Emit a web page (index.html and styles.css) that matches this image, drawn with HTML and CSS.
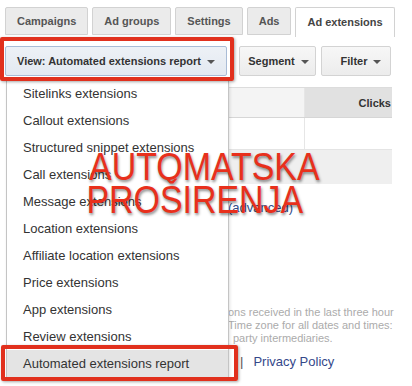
FILE: index.html
```html
<!DOCTYPE html>
<html lang="en">
<head>
<meta charset="utf-8">
<title>Ad extensions</title>
<link rel="stylesheet" href="styles.css">
</head>
<body>
<div class="page">
  <nav class="tabs">
    <div class="tab">Campaigns</div>
    <div class="tab">Ad groups</div>
    <div class="tab">Settings</div>
    <div class="tab">Ads</div>
    <div class="tab tab-active">Ad extensions</div>
  </nav>

  <div class="toolbar">
    <div class="btn btn-view">View: Automated extensions report <span class="caret"></span></div>
    <div class="btn btn-segment">Segment <span class="caret"></span></div>
    <div class="btn btn-filter">Filter <span class="caret"></span></div>
  </div>

  <div class="content">
    <div class="row row-head">
      <div class="cell cell-a"></div>
      <div class="cell cell-b">Clicks</div>
    </div>
    <div class="row row-white">
      <div class="cell cell-a"></div>
      <div class="cell cell-b"></div>
    </div>
    <div class="row row-grey"></div>
    <div class="advanced">(advanced)</div>
    <div class="note">
      <div>ons received in the last three hour</div>
      <div>Time zone for all dates and times:</div>
      <div class="note-indent">party intermediaries.</div>
    </div>
    <div class="links"><span class="sep">|</span><span class="link">Privacy Policy</span></div>
  </div>

  <ul class="menu">
    <li class="item">Sitelinks extensions</li>
    <li class="item">Callout extensions</li>
    <li class="item">Structured snippet extensions</li>
    <li class="item">Call extensions</li>
    <li class="item">Message extensions</li>
    <li class="item">Location extensions</li>
    <li class="item">Affiliate location extensions</li>
    <li class="item">Price extensions</li>
    <li class="item">App extensions</li>
    <li class="item">Review extensions</li>
    <li class="item item-selected">Automated extensions report</li>
  </ul>

  <div class="mark mark-view"></div>
  <div class="mark mark-item"></div>

  <div class="caption">
    <span class="caption-line">AUTOMATSKA</span>
    <span class="caption-line caption-line2">PROŠIRENJA</span>
  </div>
</div>
</body>
</html>
```

FILE: styles.css
```css
* { box-sizing: border-box; }

html, body {
  margin: 0;
  padding: 0;
  background: #ffffff;
}

body {
  font-family: "Liberation Sans", Arial, sans-serif;
  color: #333333;
}

.page {
  position: relative;
  width: 412px;
  height: 386px;
  overflow: hidden;
  background: #ffffff;
}

/* Tabs */
.tabs {
  display: flex;
  align-items: flex-start;
  gap: 4px;
  padding: 7px 0 0 5px;
  height: 37px;
}

.tab {
  height: 28px;
  padding: 0 11px;
  display: flex;
  align-items: center;
  font-size: 11px;
  font-weight: bold;
  color: #555555;
  background: #ebebeb;
  border: 1px solid #d2d2d2;
  border-radius: 2px 2px 0 0;
}

.tab-active {
  height: 30px;
  background: #ffffff;
  border-bottom: none;
  color: #444444;
  padding-bottom: 2px;
}

/* Toolbar */
.toolbar {
  display: flex;
  align-items: flex-start;
  gap: 12px;
  padding: 9px 0 0 5px;
  height: 43px;
}

.toolbar .btn-segment { margin-left: 0; }
.toolbar .btn-filter { margin-left: -7px; }

.btn {
  height: 30px;
  display: flex;
  align-items: center;
  justify-content: center;
  gap: 6px;
  font-size: 11px;
  font-weight: bold;
  color: #333333;
  background: linear-gradient(#f7f7f7, #ececec);
  border: 1px solid #d3d3d3;
  border-radius: 2px;
}

.btn-view {
  width: 222px;
  background: linear-gradient(#edf1f6, #e3e9f1);
  border-color: #a9bcd6;
}

.btn-segment { width: 77px; padding-left: 2px; }
.btn-filter { width: 70px; padding-left: 10px; }

.caret {
  width: 0;
  height: 0;
  border-left: 4px solid transparent;
  border-right: 4px solid transparent;
  border-top: 4px solid #555555;
  margin-top: 1px;
}

/* Content behind the menu */
.content {
  margin: 7px 0 0 228px;
  width: 164px;
}

.row {
  display: flex;
}

.row-head {
  height: 31px;
  border-top: 1px solid #dcdcdc;
  border-bottom: 1px solid #d6d6d6;
}

.row-white {
  height: 32px;
  border-bottom: 1px solid #e4e4e4;
}

.row-grey {
  height: 34px;
  background: #efefef;
}

.cell {
  display: flex;
  align-items: center;
}

.cell-a {
  width: 77px;
  border-right: 1px solid #e6e6e6;
}

.row-head .cell-a { background: #f4f4f4; }

.cell-b {
  flex: 1;
  justify-content: flex-end;
  padding-right: 1px;
  font-size: 11px;
  font-weight: bold;
  color: #333333;
}

.row-head .cell-b { background: #e1e1e1; }

.advanced {
  margin-top: 16px;
  line-height: 16px;
  font-size: 13px;
  color: #2f4b88;
}

.note {
  margin-top: 90px;
  font-size: 11px;
  line-height: 13px;
  color: #ababab;
  white-space: nowrap;
}

.note-indent { padding-left: 5px; }

.links {
  margin-top: 9px;
  display: flex;
  align-items: center;
  gap: 10px;
  padding-left: 12px;
  line-height: 16px;
  font-size: 13px;
}

.sep { color: #555555; }
.link { color: #34478a; }

/* Dropdown menu */
.menu {
  position: absolute;
  left: 6px;
  top: 80px;
  width: 223px;
  margin: 0;
  padding: 0;
  list-style: none;
  background: #ffffff;
  border-left: 1px solid #c4c4c4;
  border-right: 1px solid #c4c4c4;
  box-shadow: 1px 2px 3px rgba(0, 0, 0, 0.12);
}

.item {
  height: 27px;
  display: flex;
  align-items: center;
  padding-left: 16px;
  font-size: 13px;
  color: #333333;
  white-space: nowrap;
}

.item-selected {
  background: #e4e4e4;
}

/* Red annotation boxes */
.mark {
  position: absolute;
  border: 4px solid #e1301d;
  border-radius: 2px;
  box-shadow: 1px 1px 3px rgba(0, 0, 0, 0.35);
}

.mark-view {
  left: 0;
  top: 37px;
  width: 234px;
  height: 44px;
}

.mark-item {
  left: 1px;
  top: 345px;
  width: 237px;
  height: 36px;
}

/* Overlay caption */
.caption {
  position: absolute;
  left: 89px;
  top: 150px;
  font-family: "Liberation Sans", Arial, sans-serif;
  font-size: 39px;
  line-height: 33px;
  color: #e8301c;
  text-shadow: 1px 2px 3px rgba(0, 0, 0, 0.45);
  transform: scaleX(0.87);
  transform-origin: left top;
  white-space: nowrap;
}

.caption-line {
  display: block;
}

.caption-line2 {
  margin-left: -3px;
}
```
